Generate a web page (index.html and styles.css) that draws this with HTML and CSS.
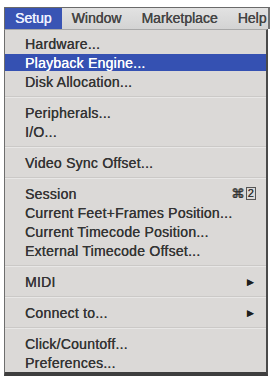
FILE: index.html
```html
<!DOCTYPE html>
<html>
<head>
<meta charset="utf-8">
<link rel="stylesheet" href="styles.css">
</head>
<body>
<div class="shot">
  <div class="menubar">
    <span class="mb-item active">Setup</span>
    <span class="mb-item">Window</span>
    <span class="mb-item">Marketplace</span>
    <span class="mb-item">Help</span>
  </div>
  <div class="panel">
    <div class="item">Hardware...</div>
    <div class="item hl">Playback Engine...</div>
    <div class="item">Disk Allocation...</div>
    <div class="sep"></div>
    <div class="item">Peripherals...</div>
    <div class="item">I/O...</div>
    <div class="sep"></div>
    <div class="item">Video Sync Offset...</div>
    <div class="sep"></div>
    <div class="item"><span>Session</span><span class="key">⌘<span class="box">2</span></span></div>
    <div class="item">Current Feet+Frames Position...</div>
    <div class="item">Current Timecode Position...</div>
    <div class="item">External Timecode Offset...</div>
    <div class="sep"></div>
    <div class="item"><span>MIDI</span><span class="arrow">▶</span></div>
    <div class="sep"></div>
    <div class="item"><span>Connect to...</span><span class="arrow">▶</span></div>
    <div class="sep"></div>
    <div class="item">Click/Countoff...</div>
    <div class="item">Preferences...</div>
  </div>
</div>
</body>
</html>
```
FILE: styles.css
```css
html, body {
  margin: 0;
  padding: 0;
  background: #ffffff;
}
.shot {
  padding: 7px 4px 0 4px;
  width: 266px;
  font-family: "Liberation Sans", Arial, sans-serif;
}
.menubar {
  display: flex;
  height: 21px;
  border-top: 1px solid #6a6a6a;
  border-left: 1px solid #6a6a6a;
  border-right: 2px solid #707070;
  background: linear-gradient(#e2e2e2, #d3d3d3);
  overflow: hidden;
  white-space: nowrap;
}
.mb-item {
  padding: 0 10px 0 10px;
  font-size: 14px;
  line-height: 20px;
  color: #444444;
  text-shadow: 0.3px 0 0 #444444;
}
.mb-item.active {
  background: #3954b4;
  color: #eef1ff;
  text-shadow: 0.3px 0 0 #eef1ff;
}
.panel {
  width: 261px;
  background: #dbd9d7;
  border-top: 1px solid #a8a8a8;
  border-left: 1px solid #6e6e6e;
  border-right: 2px solid #4a4a4a;
  border-bottom: 4px solid #3e3e3e;
  padding: 4px 0 0 0;
  box-sizing: content-box;
  height: 338px;
}
.item {
  display: flex;
  justify-content: space-between;
  align-items: center;
  height: 19px;
  padding: 0 12px 0 20px;
  font-size: 14px;
  letter-spacing: 0.25px;
  color: #343434;
  text-shadow: 0.2px 0 0 #343434;
  white-space: nowrap;
}
.item.hl {
  background: #3551b2;
  color: #ffffff;
  text-shadow: 0.2px 0 0 #ffffff;
  height: 17px;
  margin: 1px 0;
}
.sep {
  height: 12px;
  background: linear-gradient(transparent 5px, #cbc9c7 5px, #cbc9c7 6px, #e8e7e6 6px, #e8e7e6 7px, transparent 7px);
}
.key {
  font-size: 13px;
  display: flex;
  align-items: center;
  gap: 1px;
  margin-right: -2px;
}
.box {
  display: inline-block;
  border: 1px solid #555;
  font-size: 11px;
  line-height: 11px;
  padding: 0 1px;
}
.arrow {
  font-size: 9px;
  color: #1e1e1e;
}
```
